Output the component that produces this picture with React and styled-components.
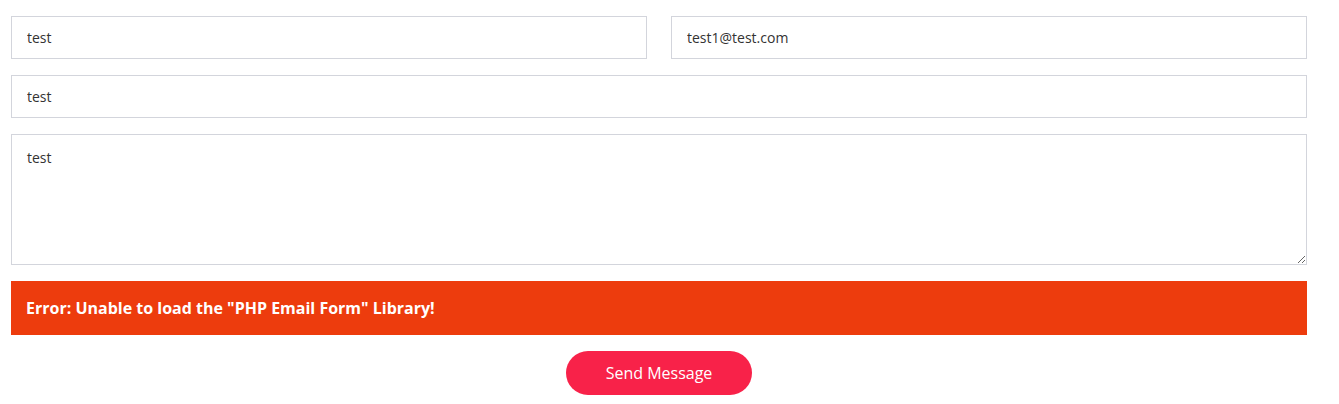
import React from 'react'
import styled, { createGlobalStyle } from 'styled-components'

const GlobalStyle = createGlobalStyle`
  body {
    margin: 0;
    background: #fff;
    font-family: "Open Sans", sans-serif;
  }
`

const Form = styled.form`
  padding: 16px 32px 0 11px;
  display: flex;
  flex-direction: column;
  gap: 16px;
`

const Row = styled.div`
  display: grid;
  grid-template-columns: ${props => props.cols === 2 ? '1fr 1fr' : '1fr'};
  gap: 24px;
`

const Field = styled.input`
  box-sizing: border-box;
  width: 100%;
  height: 43px;
  padding: 0 15px;
  border: 1px solid #d3d5dc;
  border-radius: 0;
  font-family: "Open Sans", sans-serif;
  font-size: 14px;
  color: #333;
  outline: none;
  background: #fff;
`

const Message = styled.textarea`
  display: block;
  box-sizing: border-box;
  width: 100%;
  height: 131px;
  padding: 12px 15px;
  border: 1px solid #d3d5dc;
  border-radius: 0;
  font-family: "Open Sans", sans-serif;
  font-size: 14px;
  line-height: 22px;
  color: #333;
  outline: none;
`

const ErrorBox = styled.div`
  background: #ed3c0d;
  color: #fff;
  font-weight: 700;
  font-size: 16px;
  height: 54px;
  display: flex;
  align-items: center;
  padding: 0 15px;
`

const Actions = styled.div`
  display: flex;
  justify-content: center;
`

const SendButton = styled.button`
  background: #f82249;
  color: #fff;
  border: 0;
  border-radius: 50px;
  width: 186px;
  height: 44px;
  font-family: "Open Sans", sans-serif;
  font-size: 16px;
  cursor: pointer;
`

const App = () => {
  return (
    <>
      <GlobalStyle />
      <Form onSubmit={e => e.preventDefault()}>
        <Row cols={2}>
          <Field type="text" defaultValue="test" />
          <Field type="email" defaultValue="test1@test.com" />
        </Row>
        <Row>
          <Field type="text" defaultValue="test" />
        </Row>
        <Message defaultValue="test" />
        <ErrorBox>Error: Unable to load the "PHP Email Form" Library!</ErrorBox>
        <Actions>
          <SendButton type="submit">Send Message</SendButton>
        </Actions>
      </Form>
    </>
  )
}

export default App
